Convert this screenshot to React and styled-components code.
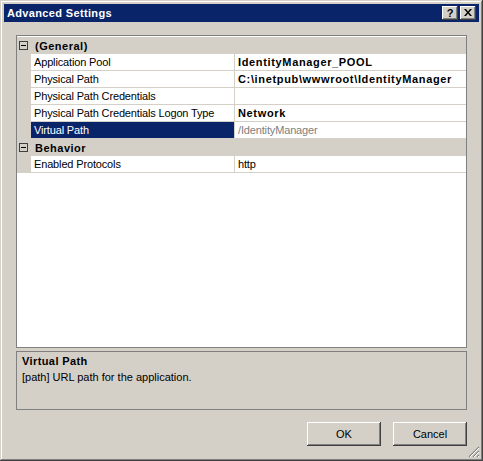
import React from 'react';
import styled, { createGlobalStyle } from 'styled-components';

const GlobalStyle = createGlobalStyle`
  html, body {
    margin: 0;
    padding: 0;
    background: #d4d0c8;
  }
  body {
    font-family: "Liberation Sans", Arial, sans-serif;
    font-size: 11px;
    color: #000;
  }
`;

const Window = styled.div`
  position: relative;
  width: 483px;
  height: 461px;
  box-sizing: border-box;
  padding: 4px;
  background: #d4d0c8;
  box-shadow: inset -1px -1px #404040, inset 1px 1px #d4d0c8,
    inset -2px -2px #808080, inset 2px 2px #ffffff;
  display: flex;
  flex-direction: column;
`;

const TitleBar = styled.div`
  height: 18px;
  background: #0a246a;
  display: flex;
  align-items: center;
  padding: 0 3px 0 2px;
`;

const Title = styled.div`
  flex: 1;
  color: #fff;
  font-weight: bold;
  font-size: 11px;
  letter-spacing: 0.35px;
  padding-left: 1px;
`;

const CaptionButton = styled.div`
  width: 16px;
  height: 14px;
  box-sizing: border-box;
  margin-left: 2px;
  background: #d4d0c8;
  box-shadow: inset -1px -1px #404040, inset 1px 1px #ffffff,
    inset -2px -2px #808080;
  display: flex;
  align-items: center;
  justify-content: center;
  font-weight: bold;
  font-size: 11px;
  line-height: 14px;
  padding-bottom: 1px;
`;

const Body = styled.div`
  flex: 1;
  display: flex;
  flex-direction: column;
  padding: 13px 12px 11px;
`;

const Grid = styled.div`
  height: 313px;
  box-sizing: border-box;
  border: 1px solid #808080;
  background: #fff;
  padding-top: 1px;
`;

const CategoryRow = styled.div`
  height: 17px;
  background: #d4d0c8;
  display: flex;
  align-items: center;
  font-weight: bold;
  letter-spacing: 0.5px;
`;

const Toggle = styled.div`
  width: 9px;
  height: 9px;
  box-sizing: border-box;
  border: 1px solid #404040;
  margin: 0 7px 0 2px;
  position: relative;
  &::after {
    content: '';
    position: absolute;
    left: 1px;
    right: 1px;
    top: 3px;
    height: 1px;
    background: #000;
  }
`;

const PropRow = styled.div`
  height: 17px;
  display: grid;
  grid-template-columns: 14px 204px 1fr;
`;

const Margin = styled.div`
  background: #d4d0c8;
`;

const NameCell = styled.div`
  box-sizing: border-box;
  padding-left: 3px;
  line-height: 16px;
  white-space: nowrap;
  letter-spacing: -0.15px;
  border-bottom: 1px solid #d4d0c8;
  border-right: 1px solid #d4d0c8;
  background: ${p => (p.$selected ? '#0a246a' : '#fff')};
  color: ${p => (p.$selected ? '#fff' : '#000')};
`;

const ValueCell = styled.div`
  box-sizing: border-box;
  padding-left: 3px;
  line-height: 16px;
  white-space: nowrap;
  overflow: hidden;
  border-bottom: 1px solid #d4d0c8;
  font-weight: ${p => (p.$bold ? 'bold' : 'normal')};
  letter-spacing: ${p => (p.$bold ? '0.65px' : '-0.15px')};
  color: ${p => (p.$readOnly ? '#808080' : '#000')};
`;

const Description = styled.div`
  height: 59px;
  box-sizing: border-box;
  margin-top: 3px;
  border: 1px solid #808080;
  padding: 2px 5px;
`;

const DescTitle = styled.div`
  font-weight: bold;
  letter-spacing: 0.4px;
  line-height: 14px;
`;

const DescText = styled.div`
  line-height: 14px;
  margin-top: 2px;
`;

const Footer = styled.div`
  margin-top: 12px;
  padding-right: 0;
  display: flex;
  justify-content: flex-end;
  gap: 12px;
`;

const Button = styled.div`
  width: 74px;
  height: 24px;
  box-sizing: border-box;
  display: flex;
  align-items: center;
  justify-content: center;
  background: #d4d0c8;
  box-shadow: inset -1px -1px #404040, inset 1px 1px #ffffff,
    inset -2px -2px #808080;
`;

const Grip = styled.svg`
  position: absolute;
  right: 3px;
  bottom: 3px;
`;

const CloseGlyph = () => (
  <svg width="8" height="7" viewBox="0 0 8 7">
    <path d="M0 0h2l2 2.5L6 0h2L5 3.5 8 7H6L4 4.5 2 7H0l3-3.5z" fill="#000" />
  </svg>
);

const general = [
  { name: 'Application Pool', value: 'IdentityManager_POOL', bold: true },
  { name: 'Physical Path', value: 'C:\\inetpub\\wwwroot\\IdentityManager', bold: true },
  { name: 'Physical Path Credentials', value: '' },
  { name: 'Physical Path Credentials Logon Type', value: 'Network', bold: true },
  { name: 'Virtual Path', value: '/IdentityManager', readOnly: true, selected: true },
];

const behavior = [{ name: 'Enabled Protocols', value: 'http' }];

const Category = ({ title }) => (
  <CategoryRow>
    <Toggle />
    {title}
  </CategoryRow>
);

const Prop = ({ name, value, bold, readOnly, selected }) => (
  <PropRow>
    <Margin />
    <NameCell $selected={selected}>{name}</NameCell>
    <ValueCell $bold={bold} $readOnly={readOnly}>{value}</ValueCell>
  </PropRow>
);

export default function App() {
  return (
    <>
      <GlobalStyle />
      <Window>
        <TitleBar>
          <Title>Advanced Settings</Title>
          <CaptionButton>?</CaptionButton>
          <CaptionButton>
            <CloseGlyph />
          </CaptionButton>
        </TitleBar>
        <Body>
          <Grid>
            <Category title="(General)" />
            {general.map(p => (
              <Prop key={p.name} {...p} />
            ))}
            <Category title="Behavior" />
            {behavior.map(p => (
              <Prop key={p.name} {...p} />
            ))}
          </Grid>
          <Description>
            <DescTitle>Virtual Path</DescTitle>
            <DescText>[path] URL path for the application.</DescText>
          </Description>
          <Footer>
            <Button>OK</Button>
            <Button>Cancel</Button>
          </Footer>
        </Body>
        <Grip width="12" height="12" viewBox="0 0 12 12">
          <path d="M11 1L1 11M11 5L5 11M11 9L9 11" stroke="#808080" strokeWidth="1.2" />
          <path d="M11 2L2 11M11 6L6 11M11 10L10 11" stroke="#ffffff" strokeWidth="1" />
        </Grip>
      </Window>
    </>
  );
}
